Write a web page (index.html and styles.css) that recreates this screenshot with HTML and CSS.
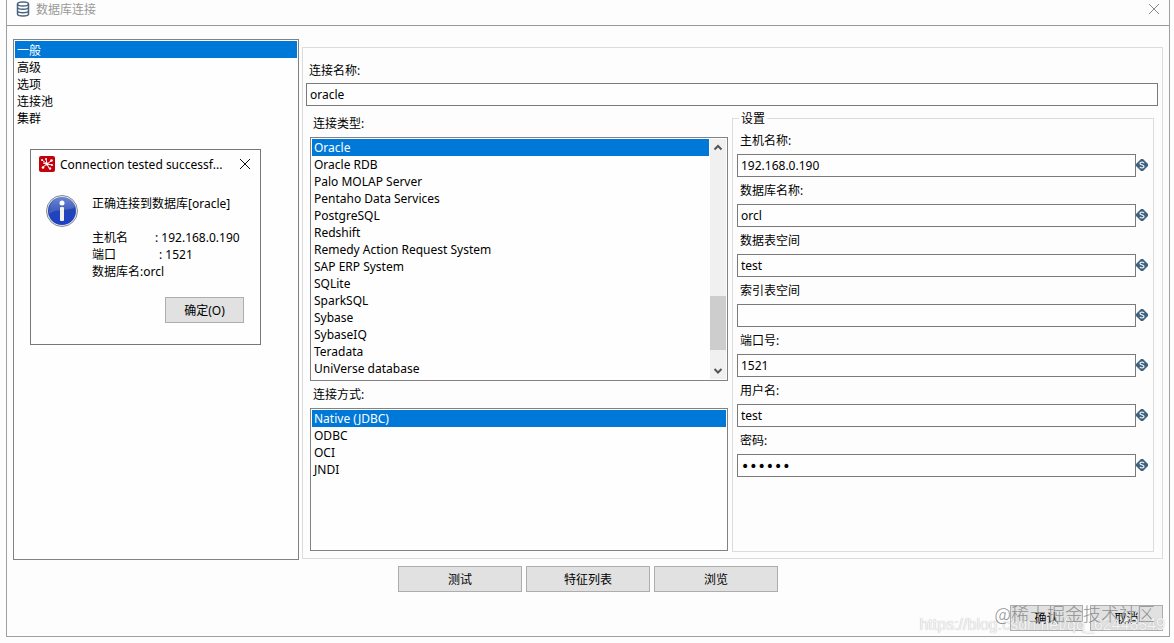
FILE: index.html
```html
<!DOCTYPE html>
<html lang="zh-CN">
<head>
    <meta charset="UTF-8">
    <meta name="viewport" content="width=device-width, initial-scale=1.0">
    <title>数据库连接</title>
    <link rel="stylesheet" href="styles.css">
</head>
<body>
    <svg width="0" height="0" class="defs">
        <symbol id="var" viewBox="0 0 12 12">
            <path d="M5 0H7L12 5V7L7 12H5L0 7V5Z" fill="#3f617c"/>
            <path d="M8 4.200C7.600 2.700 4 2.700 4 4.500C4 6.300 8 5.600 8 7.500C8 9.300 4.400 9.300 4 7.800" fill="none" stroke="#e4edf3" stroke-width="1.300"/>
        </symbol>
    </svg>

    <div class="window">
        <header class="titlebar">
            <svg class="db-icon" viewBox="0 0 14 16" width="14" height="16" fill="none" stroke="#4b6580" stroke-width="1.500">
                <ellipse cx="7" cy="3" rx="5.500" ry="2"/>
                <path d="M1.500 3V13C1.500 15.600 12.500 15.600 12.500 13V3M1.500 6.300C1.500 8.900 12.500 8.900 12.500 6.300M1.500 9.700C1.500 12.300 12.500 12.300 12.500 9.700"/>
            </svg>
            <span class="title">数据库连接</span>
            <button class="close" type="button" aria-label="关闭">
                <svg viewBox="0 0 12 12" width="12" height="12"><path d="M1 1L11 11M11 1L1 11" stroke="#888" fill="none"/></svg>
            </button>
        </header>

        <main class="main">
            <select class="listbox sidebar" size="5" aria-label="分类">
                <option selected>一般</option>
                <option>高级</option>
                <option>选项</option>
                <option>连接池</option>
                <option>集群</option>
            </select>

            <section class="panel">
                <label class="label" for="name">连接名称:</label>
                <input class="text" id="name" type="text" value="oracle">

                <div class="columns">
                    <div class="column">
                        <label class="label" for="type">连接类型:</label>
                        <div class="scroll-list">
                            <select class="listbox" id="type" size="14">
                                <option selected>Oracle</option>
                                <option>Oracle RDB</option>
                                <option>Palo MOLAP Server</option>
                                <option>Pentaho Data Services</option>
                                <option>PostgreSQL</option>
                                <option>Redshift</option>
                                <option>Remedy Action Request System</option>
                                <option>SAP ERP System</option>
                                <option>SQLite</option>
                                <option>SparkSQL</option>
                                <option>Sybase</option>
                                <option>SybaseIQ</option>
                                <option>Teradata</option>
                                <option>UniVerse database</option>
                            </select>
                            <div class="scrollbar">
                                <svg viewBox="0 0 16 17" width="16" height="17"><path d="M4.500 10.500L8 7L11.500 10.500" stroke="#555" stroke-width="2" fill="none"/></svg>
                                <div class="thumb"></div>
                                <svg viewBox="0 0 16 17" width="16" height="17"><path d="M4.500 7L8 10.500L11.500 7" stroke="#555" stroke-width="2" fill="none"/></svg>
                            </div>
                        </div>
                        <label class="label access-label" for="access">连接方式:</label>
                        <select class="listbox access" id="access" size="4">
                            <option selected>Native (JDBC)</option>
                            <option>ODBC</option>
                            <option>OCI</option>
                            <option>JNDI</option>
                        </select>
                    </div>

                    <fieldset class="settings">
                        <legend>设置</legend>
                        <label class="label" for="host">主机名称:</label>
                        <div class="field"><input class="text" id="host" type="text" value="192.168.0.190"><svg width="12" height="12"><use href="#var"/></svg></div>
                        <label class="label" for="db">数据库名称:</label>
                        <div class="field"><input class="text" id="db" type="text" value="orcl"><svg width="12" height="12"><use href="#var"/></svg></div>
                        <label class="label" for="data-space">数据表空间</label>
                        <div class="field"><input class="text" id="data-space" type="text" value="test"><svg width="12" height="12"><use href="#var"/></svg></div>
                        <label class="label" for="index-space">索引表空间</label>
                        <div class="field"><input class="text" id="index-space" type="text"><svg width="12" height="12"><use href="#var"/></svg></div>
                        <label class="label" for="port">端口号:</label>
                        <div class="field"><input class="text" id="port" type="text" value="1521"><svg width="12" height="12"><use href="#var"/></svg></div>
                        <label class="label" for="user">用户名:</label>
                        <div class="field"><input class="text" id="user" type="text" value="test"><svg width="12" height="12"><use href="#var"/></svg></div>
                        <label class="label" for="password">密码:</label>
                        <div class="field"><input class="text password" id="password" type="password" value="oracle"><svg width="12" height="12"><use href="#var"/></svg></div>
                    </fieldset>
                </div>
            </section>
        </main>

        <div class="actions">
            <button class="btn" type="button">测试</button>
            <button class="btn" type="button">特征列表</button>
            <button class="btn" type="button">浏览</button>
        </div>

        <footer class="footer">
            <button class="btn" type="button">确认</button>
            <button class="btn" type="button">取消</button>
        </footer>

        <span class="mark mark-url">https://blog.csdn.net/qq_62448549</span>
        <span class="mark mark-site">@稀土掘金技术社区</span>
    </div>

    <div class="dialog" role="dialog" aria-labelledby="dialog-title">
        <div class="dialog-head">
            <svg viewBox="0 0 16 16" width="16" height="16">
                <rect width="16" height="16" rx="2" fill="#c4000b"/>
                <path d="M8 8L3 4M8 8L7 3M8 8L12 5M8 8L13 9M8 8L10 12M8 8L4 11M4 7L8 8" stroke="#fff" fill="none"/>
                <g fill="#fff"><circle cx="3" cy="4" r="1"/><circle cx="7" cy="3" r="1"/><circle cx="12.500" cy="4.500" r="1.300"/><circle cx="13" cy="9" r="1"/><circle cx="11" cy="12.500" r="1.200"/><circle cx="4" cy="11.500" r="1.300"/><circle cx="8" cy="8" r="1.500"/></g>
            </svg>
            <span class="dialog-title" id="dialog-title">Connection tested successf...</span>
            <button class="close" type="button" aria-label="关闭">
                <svg viewBox="0 0 12 12" width="12" height="12"><path d="M1 1L11 11M11 1L1 11" stroke="#111" fill="none"/></svg>
            </button>
        </div>
        <div class="dialog-body">
            <svg viewBox="0 0 32 32" width="32" height="32">
                <defs>
                    <linearGradient id="blue" x1="0" y1="0" x2="0" y2="1">
                        <stop offset="0" stop-color="#5070cc"/>
                        <stop offset="0.450" stop-color="#2346b4"/>
                        <stop offset="1" stop-color="#1c40c8"/>
                    </linearGradient>
                </defs>
                <circle cx="16" cy="16" r="15.500" fill="#e8e8e8" stroke="#858b94"/>
                <circle cx="16" cy="16" r="14" fill="url(#blue)"/>
                <path d="M3 19C3 4 13 2 16 2C23 2 28 7 29 12C22 17 10 13 3 19Z" fill="#fff" opacity="0.150"/>
                <circle cx="16" cy="8" r="2.500" fill="#fff"/>
                <rect x="14" y="12" width="4" height="14" rx="1" fill="#f2f2f2"/>
            </svg>
            <div>
                <p>正确连接到数据库[oracle]</p>
                <dl class="result">
                    <div><dt class="wide">主机名</dt><dd>: 192.168.0.190</dd></div>
                    <div><dt class="wider">端口</dt><dd>: 1521</dd></div>
                    <div><dt>数据库名</dt><dd>:orcl</dd></div>
                </dl>
            </div>
        </div>
        <button class="btn dialog-ok" type="button">确定(O)</button>
    </div>
</body>
</html>
```
FILE: styles.css
```css
* {
    box-sizing: border-box;
}
body {
    position: relative;
    margin: 0;
    background-color: #fdfdfd;
    color: #000;
    font: 12px/17px "Noto Sans", "Noto Sans CJK SC", sans-serif;
}
input, select, button {
    font: inherit;
    color: inherit;
}
.defs {
    position: absolute;
}
.window {
    position: relative;
    display: flex;
    flex-direction: column;
    min-height: calc(100vh - 6px);
    margin: 0 4px 6px 6px;
    border: 1px solid #a0a0a0;
    border-top: 0;
}
.titlebar {
    display: flex;
    align-items: center;
    gap: 6px;
    height: 26px;
    padding: 0 9px 7px;
    border-bottom: 1px solid #999;
}
.title {
    flex: 1;
    color: #999;
}
.close {
    display: flex;
    padding: 0;
    border: 0;
    background: none;
}
.main {
    flex: 1;
    display: flex;
    gap: 3px;
    padding: 13px 6px 0;
}

/* list boxes */
.listbox {
    display: block;
    width: 100%;
    padding: 1px;
    border: 1px solid #828282;
    border-radius: 0;
    background-color: #fefefe;
    outline: none;
    overflow: hidden;
}
.listbox option {
    height: 17px;
    min-height: 17px;
    padding: 0 2px;
    line-height: 17px;
}
.listbox option:checked {
    background: linear-gradient(#0078d7, #0078d7);
    -webkit-text-fill-color: #fff;
}
.listbox.sidebar {
    flex: none;
    width: 286px;
    height: auto;
}
.scroll-list {
    display: flex;
    height: 244px;
    border: 1px solid #828282;
}
.scroll-list .listbox {
    flex: 1;
    height: 100%;
    padding-right: 0;
    border: 0;
}
.scrollbar {
    display: flex;
    flex-direction: column;
    width: 16px;
    margin: 1px;
    background-color: #f0f0f0;
}
.thumb {
    height: 54px;
    margin-top: auto;
    margin-bottom: 12px;
    background-color: #cdcdcd;
}
.listbox.access {
    flex: 1;
}

/* form */
.panel {
    flex: 1;
    display: flex;
    flex-direction: column;
    margin: 8px 0 1px;
    padding: 14px 4px 6px 3px;
    border: 1px solid #dcdcdc;
}
.label {
    display: block;
    padding-left: 3px;
}
.text {
    display: block;
    width: 100%;
    height: 23px;
    padding: 0 3px;
    border: 1px solid #7a7a7a;
    border-radius: 0;
    background-color: #fefefe;
    outline: none;
}
.text.password {
    font-family: "DejaVu Sans", sans-serif;
    font-size: 14px;
}
.panel > .text {
    margin-top: 4px;
}
.columns {
    flex: 1;
    display: grid;
    grid-template-columns: 209fr 211fr;
    gap: 4px;
    padding: 9px 4px 0;
}
.column {
    display: flex;
    flex-direction: column;
    min-width: 0;
    padding-bottom: 1px;
}
.column .scroll-list {
    margin-top: 5px;
}
.access-label {
    margin: 5px 0;
}
.settings {
    min-width: 0;
    margin: 0;
    margin-top: -5px;
    padding: 0 5px 0 4px;
    border: 1px solid #dcdcdc;
}
.settings legend {
    margin-left: 2px;
    padding: 0 2px;
}
.settings .label {
    margin-top: 5px;
    margin-bottom: 5px;
}
.field {
    display: flex;
    align-items: center;
}
.field .text {
    flex: 1;
    min-width: 0;
}
.field svg {
    margin-bottom: 1px;
}

/* buttons */
.btn {
    width: 124px;
    height: 26px;
    padding: 0;
    border: 1px solid #adadad;
    border-radius: 0;
    background-color: #e1e1e1;
}
.actions {
    display: flex;
    justify-content: center;
    gap: 4px;
    margin-top: 6px;
}
.footer {
    display: flex;
    justify-content: flex-end;
    gap: 7px;
    padding: 13px 6px 5px;
}
.footer .btn {
    width: 73px;
}

/* watermarks in the corner */
.mark {
    position: absolute;
    white-space: nowrap;
    pointer-events: none;
}
.mark-url {
    right: 4px;
    bottom: 2px;
    color: #f4f4f4;
    font: 16px/18px "Liberation Sans", sans-serif;
    text-shadow: 0 0 1px #aaa;
}
.mark-site {
    right: 14px;
    bottom: 12px;
    color: #909090;
    font: 18px/22px "Noto Sans CJK SC", sans-serif;
    font-weight: 300;
}

/* test result */
.dialog {
    position: absolute;
    top: 149px;
    left: 30px;
    width: 231px;
    padding-bottom: 21px;
    border: 1px solid #777;
    background-color: #fefefe;
}
.dialog-head {
    display: flex;
    align-items: center;
    gap: 5px;
    height: 28px;
    padding: 0 9px 0 8px;
}
.dialog-title {
    flex: 1;
    white-space: nowrap;
}
.dialog-body {
    display: flex;
    gap: 14px;
    padding: 17px 0 0 15px;
}
.dialog-body p {
    margin: 0;
}
.result {
    margin: 17px 0 0;
}
.result div {
    display: flex;
}
.result dd {
    margin: 0;
}
.wide {
    width: 63px;
}
.wider {
    width: 67px;
}
.dialog-ok {
    display: block;
    width: 79px;
    margin: 17px 16px 0 auto;
}
```
